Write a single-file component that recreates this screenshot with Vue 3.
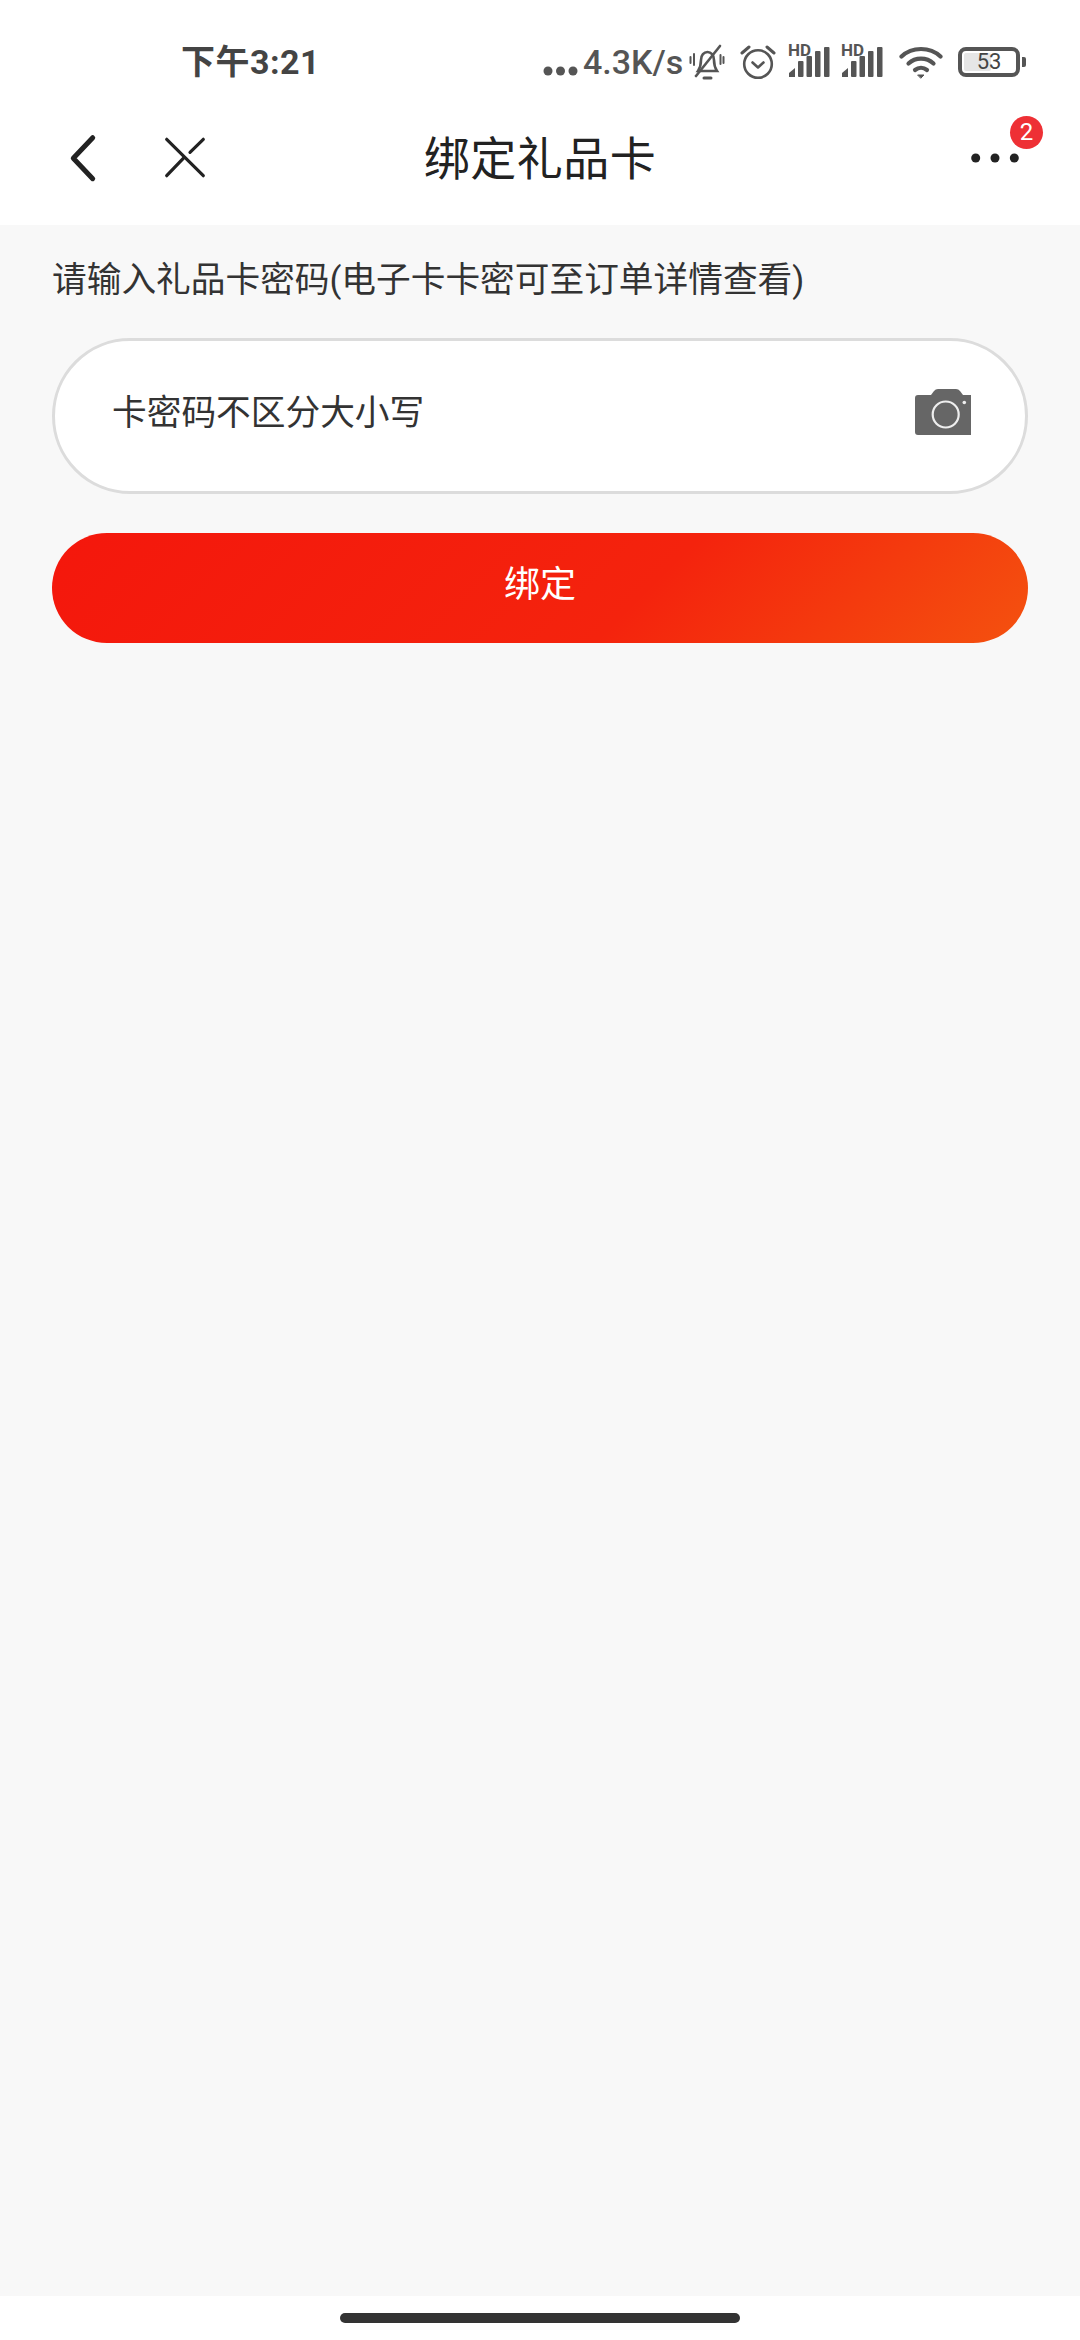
<script setup>
const badgeCount = 2;
const batteryLevel = 53;
</script>

<template>
  <div class="page">
    <header class="top">
      <div class="status">
        <span class="clock">下午3:21</span>
        <div class="status-right">
          <svg class="more-dots" width="35" height="10" viewBox="0 0 35 10">
            <circle cx="5" cy="5" r="4.5" />
            <circle cx="17.5" cy="5" r="4.5" />
            <circle cx="30" cy="5" r="4.5" />
          </svg>
          <span class="speed">4.3K/s</span>
          <svg class="ic-bell" width="36" height="36" viewBox="0 0 36 36" fill="none" stroke="#555" stroke-width="2.6" stroke-linecap="round">
            <path d="M9 27c2-3 3-5 3-11 0-5 3-8 6.500-8s6.500 3 6.500 8c0 6 1 8 3 11z" />
            <path d="M7 32L31 2" />
            <path d="M15 34h7" stroke-width="3" />
            <path d="M1.500 13v6M5 10v11M34.500 13v6M31.500 11v9" stroke-width="2" />
          </svg>
          <svg class="ic-alarm" width="36" height="36" viewBox="0 0 36 36" fill="none" stroke="#555" stroke-width="2.600" stroke-linecap="round" stroke-linejoin="round">
            <circle cx="18" cy="20" r="13.800" />
            <path d="M12.500 18.500l5.500 5 5.500-5" />
            <path d="M2 9l7-6M34 9l-7-6" stroke-width="3" />
          </svg>
          <div v-for="n in 2" :key="n" class="signal">
            <span class="hd">HD</span>
            <svg width="42" height="32" viewBox="0 0 42 32" fill="#555">
              <path d="M1 31v-4l6-5v9z" />
              <rect x="10" y="15" width="5.500" height="16" rx="1" />
              <rect x="18.500" y="10" width="5.500" height="21" rx="1" />
              <rect x="27" y="5" width="5.500" height="26" rx="1" />
              <rect x="36" y="1" width="5.500" height="30" rx="1" />
            </svg>
          </div>
          <svg class="ic-wifi" width="44" height="34" viewBox="0 0 44 34" fill="none" stroke="#555" stroke-width="4.200" stroke-linecap="round">
            <path d="M2.500 11.500C13 1.500 31 1.500 41.500 11.500" />
            <path d="M9.500 18.500c7-6.500 18-6.500 25 0" />
            <path d="M16 25c3.500-2.800 8.500-2.800 12 0" />
            <path d="M19 30h6l-3 3z" fill="#555" stroke-width="1" stroke-linejoin="round" />
          </svg>
          <div class="battery">
            <div class="battery-body">
              <div class="battery-fill" :style="{ width: batteryLevel + '%' }"></div>
              <span class="battery-num">{{ batteryLevel }}</span>
            </div>
            <span class="battery-tip"></span>
          </div>
        </div>
      </div>

      <nav class="nav">
        <div class="nav-left">
          <svg width="30" height="50" viewBox="0 0 30 50" fill="none" stroke="#222" stroke-width="5" stroke-linecap="round" stroke-linejoin="round">
            <path d="M23.700 4.700L4.300 25.300l19.400 20.400" />
          </svg>
          <svg width="44" height="44" viewBox="0 0 44 44" fill="none" stroke="#222" stroke-width="3.200" stroke-linecap="round">
            <path d="M3.700 3.300L40.300 39.700" />
            <path d="M40.300 3.300L27 16.300" />
            <path d="M20.300 22.300L3.700 39.700" />
          </svg>
        </div>
        <h1 class="title">绑定礼品卡</h1>
        <div class="nav-right">
          <div class="menu">
            <svg width="48" height="10" viewBox="0 0 48 10" fill="#222">
              <circle cx="4.700" cy="5" r="4.500" />
              <circle cx="24" cy="5" r="4.500" />
              <circle cx="43.300" cy="5" r="4.500" />
            </svg>
            <span class="badge">{{ badgeCount }}</span>
          </div>
        </div>
      </nav>
    </header>

    <main class="content">
      <p class="hint">请输入礼品卡密码(电子卡卡密可至订单详情查看)</p>
      <div class="field">
        <span class="placeholder">卡密码不区分大小写</span>
        <svg class="camera" width="56" height="46" viewBox="0 0 56 46">
          <path fill="#666" d="M3 6h13l3-4q1.500-2 4-2h18q2.500 0 4 2l3 4h8v40H3q-3 0-3-3V9q0-3 3-3z" />
          <circle cx="30.700" cy="25.500" r="13" fill="none" stroke="#eee" stroke-width="2.200" />
          <circle cx="49.300" cy="13.500" r="1.800" fill="#eee" />
        </svg>
      </div>
      <button class="bind">绑定</button>
    </main>

    <footer class="home">
      <span class="pill"></span>
    </footer>
  </div>
</template>

<style>
html, body {
  margin: 0;
  background: #f8f8f8;
}
</style>

<style scoped>
.page {
  width: 1080px;
  height: 2340px;
  display: flex;
  flex-direction: column;
  background: #f8f8f8;
  font-family: Roboto, "Noto Sans CJK SC", sans-serif;
  color: #333;
}

.top {
  background: #fff;
}

.status {
  height: 56px;
  padding: 34px 54px 0 181px;
  display: flex;
  align-items: center;
  justify-content: space-between;
}

.clock {
  font-size: 34px;
  line-height: 40px;
  margin-top: 0;
  font-weight: 700;
  color: #444;
  letter-spacing: 0.5px;
}

.status-right {
  display: flex;
  align-items: center;
}

.more-dots {
  fill: #555;
  margin-top: 18px;
}

.speed {
  margin-left: 5px;
  width: 102px;
  font-size: 34px;
  font-weight: 500;
  color: #555;
  white-space: nowrap;
}

.ic-bell {
  margin-left: 4px;
}

.ic-alarm {
  margin-left: 15px;
}

.signal {
  position: relative;
  width: 42px;
  height: 32px;
  margin-left: 11px;
}

.signal:first-of-type {
  margin-left: 12px;
}

.signal svg {
  display: block;
}

.hd {
  position: absolute;
  left: 0;
  top: -4px;
  font-size: 17px;
  line-height: 16px;
  font-weight: 700;
  color: #555;
}

.ic-wifi {
  margin-left: 16px;
}

.battery {
  margin-left: 15px;
  display: flex;
  align-items: center;
}

.battery-body {
  position: relative;
  box-sizing: border-box;
  width: 62px;
  height: 30px;
  border: 4px solid #555;
  border-radius: 8px;
  padding: 2px;
  display: flex;
}

.battery-fill {
  height: 100%;
  background: #e6e6e6;
  border-radius: 2px;
}

.battery-num {
  position: absolute;
  inset: 0;
  text-align: center;
  font-size: 22px;
  line-height: 22px;
  color: #444;
}

.battery-tip {
  width: 4px;
  height: 10px;
  margin-left: 2px;
  background: #555;
  border-radius: 0 2px 2px 0;
}

.nav {
  height: 135px;
  display: grid;
  grid-template-columns: 1fr auto 1fr;
  align-items: center;
}

.nav-left {
  display: flex;
  align-items: center;
  gap: 64px;
  padding-left: 69px;
}

.title {
  margin: 0 0 6px;
  font-size: 46px;
  font-weight: 400;
  color: #222;
  letter-spacing: 0.5px;
}

.nav-right {
  display: flex;
  justify-content: flex-end;
  padding-right: 61px;
}

.menu {
  position: relative;
  display: flex;
}

.badge {
  position: absolute;
  left: 39px;
  top: -37px;
  width: 33px;
  height: 33px;
  border-radius: 50%;
  background: #ee3035;
  color: #fff;
  font-size: 24px;
  line-height: 33px;
  text-align: center;
}

.content {
  flex: 1;
  padding: 0 52px;
  display: flex;
  flex-direction: column;
}

.hint {
  margin: 25px 0 0;
  font-size: 34.700px;
  line-height: 60px;
  white-space: nowrap;
}

.field {
  box-sizing: border-box;
  height: 156px;
  margin-top: 28px;
  padding: 0 54px 0 57px;
  display: flex;
  align-items: center;
  justify-content: space-between;
  background: #fff;
  border: 3px solid #dcdcdc;
  border-radius: 78px;
}

.placeholder {
  font-size: 34.700px;
  color: #333;
  margin-top: -12px;
}

.camera {
  margin-top: -8px;
}

.bind {
  height: 110px;
  margin-top: 39px;
  padding: 0 0 14px;
  border: none;
  border-radius: 55px;
  background: linear-gradient(135deg, #f4170c 0%, #f4230d 60%, #f4520f 100%);
  color: #fff;
  font-family: inherit;
  font-size: 36px;
}

.home {
  box-sizing: border-box;
  height: 44px;
  background: #fff;
  display: flex;
  justify-content: center;
  padding-top: 17px;
}

.pill {
  width: 400px;
  height: 10px;
  border-radius: 5px;
  background: #333;
}
</style>
